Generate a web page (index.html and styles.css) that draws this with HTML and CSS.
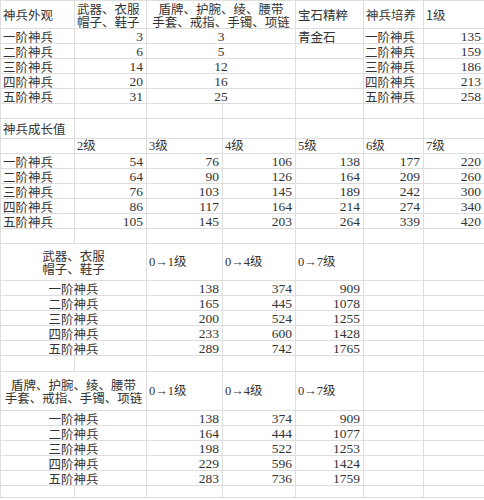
FILE: index.html
```html
<!DOCTYPE html>
<html lang="zh">
<head>
<meta charset="utf-8">
<link rel="stylesheet" href="styles.css">
</head>
<body>
<table class="sheet">
<colgroup>
<col class="c1"><col class="c2"><col class="c3"><col class="c4"><col class="c5"><col class="c6"><col class="c7">
</colgroup>
<tbody>
<tr class="h28">
<td class="t">神兵外观</td>
<td class="t">武器、衣服<br>帽子、鞋子</td>
<td class="t ctr" colspan="2">盾牌、护腕、绫、腰带<br>手套、戒指、手镯、项链</td>
<td class="t">宝石精粹</td>
<td class="t">神兵培养</td>
<td class="t">1级</td>
</tr>
<tr class="h15"><td class="t">一阶神兵</td><td class="n">3</td><td class="n ctr" colspan="2">3</td><td class="t">青金石</td><td class="t tight">一阶神兵</td><td class="n">135</td></tr>
<tr class="h15"><td class="t">二阶神兵</td><td class="n">6</td><td class="n ctr" colspan="2">5</td><td></td><td class="t tight">二阶神兵</td><td class="n">159</td></tr>
<tr class="h15"><td class="t">三阶神兵</td><td class="n">14</td><td class="n ctr" colspan="2">12</td><td></td><td class="t tight">三阶神兵</td><td class="n">186</td></tr>
<tr class="h15"><td class="t">四阶神兵</td><td class="n">20</td><td class="n ctr" colspan="2">16</td><td></td><td class="t tight">四阶神兵</td><td class="n">213</td></tr>
<tr class="h15"><td class="t">五阶神兵</td><td class="n">31</td><td class="n ctr" colspan="2">25</td><td></td><td class="t tight">五阶神兵</td><td class="n">258</td></tr>
<tr class="h15"><td></td><td></td><td></td><td></td><td></td><td></td><td></td></tr>
<tr class="h20"><td class="t">神兵成长值</td><td></td><td></td><td></td><td></td><td></td><td></td></tr>
<tr class="h15"><td></td><td class="t lv">2级</td><td class="t lv">3级</td><td class="t lv">4级</td><td class="t lv">5级</td><td class="t lv">6级</td><td class="t lv">7级</td></tr>
<tr class="h15"><td class="t">一阶神兵</td><td class="n">54</td><td class="n">76</td><td class="n">106</td><td class="n">138</td><td class="n">177</td><td class="n">220</td></tr>
<tr class="h15"><td class="t">二阶神兵</td><td class="n">64</td><td class="n">90</td><td class="n">126</td><td class="n">164</td><td class="n">209</td><td class="n">260</td></tr>
<tr class="h15"><td class="t">三阶神兵</td><td class="n">76</td><td class="n">103</td><td class="n">145</td><td class="n">189</td><td class="n">242</td><td class="n">300</td></tr>
<tr class="h15"><td class="t">四阶神兵</td><td class="n">86</td><td class="n">117</td><td class="n">164</td><td class="n">214</td><td class="n">274</td><td class="n">340</td></tr>
<tr class="h15"><td class="t">五阶神兵</td><td class="n">105</td><td class="n">145</td><td class="n">203</td><td class="n">264</td><td class="n">339</td><td class="n">420</td></tr>
<tr class="h15"><td></td><td></td><td></td><td></td><td></td><td></td><td></td></tr>
<tr class="h37"><td class="t ctr" colspan="2">武器、衣服<br>帽子、鞋子</td><td class="t lv">0→1级</td><td class="t lv">0→4级</td><td class="t lv">0→7级</td><td></td><td></td></tr>
<tr class="h15"><td class="t ctr" colspan="2">一阶神兵</td><td class="n">138</td><td class="n">374</td><td class="n">909</td><td></td><td></td></tr>
<tr class="h15"><td class="t ctr" colspan="2">二阶神兵</td><td class="n">165</td><td class="n">445</td><td class="n">1078</td><td></td><td></td></tr>
<tr class="h15"><td class="t ctr" colspan="2">三阶神兵</td><td class="n">200</td><td class="n">524</td><td class="n">1255</td><td></td><td></td></tr>
<tr class="h15"><td class="t ctr" colspan="2">四阶神兵</td><td class="n">233</td><td class="n">600</td><td class="n">1428</td><td></td><td></td></tr>
<tr class="h15"><td class="t ctr" colspan="2">五阶神兵</td><td class="n">289</td><td class="n">742</td><td class="n">1765</td><td></td><td></td></tr>
<tr class="h16"><td></td><td></td><td></td><td></td><td></td><td></td><td></td></tr>
<tr class="h39"><td class="t ctr" colspan="2">盾牌、护腕、绫、腰带<br>手套、戒指、手镯、项链</td><td class="t lv">0→1级</td><td class="t lv">0→4级</td><td class="t lv">0→7级</td><td></td><td></td></tr>
<tr class="h15"><td class="t ctr" colspan="2">一阶神兵</td><td class="n">138</td><td class="n">374</td><td class="n">909</td><td></td><td></td></tr>
<tr class="h15"><td class="t ctr" colspan="2">二阶神兵</td><td class="n">164</td><td class="n">444</td><td class="n">1077</td><td></td><td></td></tr>
<tr class="h15"><td class="t ctr" colspan="2">三阶神兵</td><td class="n">198</td><td class="n">522</td><td class="n">1253</td><td></td><td></td></tr>
<tr class="h15"><td class="t ctr" colspan="2">四阶神兵</td><td class="n">229</td><td class="n">596</td><td class="n">1424</td><td></td><td></td></tr>
<tr class="h15"><td class="t ctr" colspan="2">五阶神兵</td><td class="n">283</td><td class="n">736</td><td class="n">1759</td><td></td><td></td></tr>
<tr class="h12"><td></td><td></td><td></td><td></td><td></td><td></td><td></td></tr>
</tbody>
</table>
</body>
</html>
```

FILE: styles.css
```css
html, body {
  margin: 0;
  padding: 0;
  background: #ffffff;
}

.sheet {
  border-collapse: collapse;
  table-layout: fixed;
  width: 484px;
  color: #333333;
  font-family: "Noto Sans CJK SC", "Noto Sans", sans-serif;
  font-size: 12.5px;
  line-height: 13px;
}

.c1 { width: 74px; }
.c2 { width: 72px; }
.c3 { width: 76px; }
.c4 { width: 73px; }
.c5 { width: 68px; }
.c6 { width: 60px; }
.c7 { width: 61px; }

.sheet td {
  border: 1px solid #dedede;
  padding: 0 3px 0 2px;
  vertical-align: middle;
  white-space: nowrap;
  overflow: visible;
}

.sheet td.t {
  text-align: left;
}

.sheet td.tight {
  padding-left: 1px;
}

.sheet td.lv {
  font-family: "Liberation Serif", "Noto Sans CJK SC", serif;
  font-size: 12.5px;
}

.sheet td.n {
  text-align: right;
  font-family: "Liberation Serif", serif;
  font-size: 13.5px;
  padding-right: 3px;
}

.sheet td.ctr {
  text-align: center;
  padding: 0;
}

.h12 { height: 12px; }
.h15 { height: 15px; }
.h16 { height: 16px; }
.h20 { height: 20px; }
.h28 { height: 28px; }
.h37 { height: 37px; }
.h39 { height: 39px; }
```
